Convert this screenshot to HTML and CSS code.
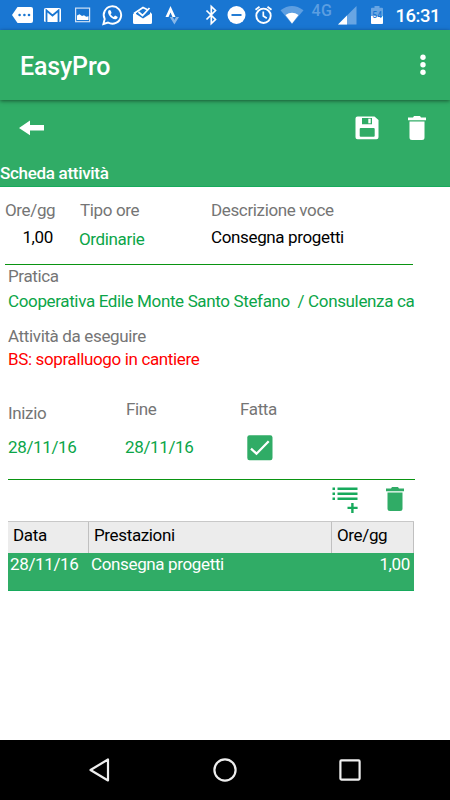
FILE: index.html
```html
<!DOCTYPE html>
<html lang="it">
<head>
<meta charset="utf-8">
<title>EasyPro</title>
<link rel="stylesheet" href="styles.css">
</head>
<body>
<div class="phone">
  <div class="status">
    <svg class="status-icons" width="392" height="30" viewBox="0 0 392 30" fill="none">
      <path d="M17.5 7H31q2 0 2 2v12q0 2-2 2H17.5L12 15z" fill="#fff"/>
      <g fill="#1976d2"><circle cx="19.6" cy="15" r="1.3"/><circle cx="24.4" cy="15" r="1.3"/><circle cx="29" cy="15" r="1.3"/></g>
      <rect x="44" y="8" width="17" height="14" rx="1.5" fill="#fff"/>
      <path d="M46.5 22V10.5l6 5 6-5V22" stroke="#1976d2" stroke-width="1.8"/>
      <rect x="75.6" y="8.1" width="14" height="13.6" stroke="#cfe2f6" stroke-width="1.2"/>
      <path d="M77 20v-4.500l2.500-1.200 2.500 1.700 2-.7 2.200 1.500 2.300-.5V20z" fill="#fff"/>
      <path d="M103.400 24l1.300-5a8.700 8.700 0 1 1 3.300 3.500z" stroke="#fff" stroke-width="1.9"/>
      <path d="M109 10c-3 2.500 2 9.700 6.800 9.200 1.500-.2 2.400-2 1.600-2.500l-2.300-1.100-1.400 1.400c-1.500-.5-2.500-1.700-3.100-2.800l1-1.300-.9-2.500z" fill="#fff"/>
      <path d="M133 14l3-2v2l7 4.500 7-4.500v-2l2 2v8.500q0 1.500-1.500 1.500h-16q-1.500 0-1.500-1.500z" fill="#fff"/>
      <path d="M134 13.500l9-6 4 2M138.500 12l4 3.500 7-7.500" stroke="#fff" stroke-width="1.800"/>
      <path d="M165.500 17L170.500 6l5 11h-3l-2-4.500-2 4.500z" fill="#fff"/>
      <path d="M169.800 17h3l1.600 3 1.600-3h3l-4.600 7.500z" fill="#85b6e8"/>
      <path d="M206.500 10.500l9 9-4.200 4V6.500l4.200 4-9 9" stroke="#fff" stroke-width="1.700"/>
      <circle cx="236.500" cy="15" r="9" fill="#fff"/>
      <path d="M231.500 15h10" stroke="#1976d2" stroke-width="1.900"/>
      <circle cx="263.500" cy="15.800" r="7.200" stroke="#fff" stroke-width="1.900"/>
      <path d="M255.500 9.700l4-3M271.500 9.700l-4-3M263.300 11.500v4.500l3.500 2.300" stroke="#fff" stroke-width="1.700"/>
      <path d="M280.500 10.200Q292 1.700 303.500 10.200L292 24z" fill="#5e9fe1"/>
      <path d="M285.500 15q6.500-4.500 13 0L292 23.500z" fill="#fff"/>
      <text x="311.500" y="16" class="net">4G</text>
      <path d="M338 24.500L356.500 6v18.500z" fill="#68a5e3"/>
      <path d="M338 24.500l9-9v9z" fill="#fff"/>
      <path d="M371 16V8.800q0-1 1-1h2.500V6h5v1.800h2.500q1 0 1 1V16z" fill="#68a5e3"/>
      <path d="M371 16h12v7.200q0 .8-1 .8h-10q-1 0-1-.8z" fill="#fff"/>
      <text x="372.300" y="18.200" class="charge">54</text>
    </svg>
    <span class="clock">16:31</span>
  </div>

  <header class="appbar">
    <h1>EasyPro</h1>
    <svg width="6" height="22" viewBox="0 0 6 22" fill="#fff"><circle cx="3" cy="3.300" r="2.700"/><circle cx="3" cy="10.800" r="2.700"/><circle cx="3" cy="18.300" r="2.700"/></svg>
  </header>

  <div class="toolbar">
    <div class="actions">
      <svg class="back" width="26" height="16" viewBox="0 0 26 16" fill="#fff"><path d="M0 8L11 .5V5h14v5.500H11v4.800z"/></svg>
      <svg width="24" height="24" viewBox="0 0 24 24"><path fill="#fff" fill-rule="evenodd" d="M2.500.5h17L23.500 4v17.300q0 2-2 2h-19q-2 0-2-2V2.500q0-2 2-2zM7 2v6.200h10V2zM5.700 12q-1 0-1 1v6.700q0 1 1 1h13q1 0 1-1V13q0-1-1-1z"/><path d="M13.300 2.700h2.400v4.600h-2.400z" fill="#fff"/></svg>
      <svg class="trash" width="18" height="24" viewBox="0 0 18 24" fill="#fff"><path d="M0 1.500h5L6 0h6l1 1.500h5v2.700H0zM1.500 5.500h15v16q0 2.500-2.500 2.500H4q-2.500 0-2.500-2.500z"/></svg>
    </div>
    <h2>Scheda attività</h2>
  </div>

  <main class="form">
    <div class="hours">
      <div class="field"><label>Ore/gg</label><span class="black amount">1,00</span></div>
      <div class="field kind"><label>Tipo ore</label><span class="green">Ordinarie</span></div>
      <div class="field"><label>Descrizione voce</label><span class="black">Consegna progetti</span></div>
    </div>
    <div class="field job"><label>Pratica</label><span class="green">Cooperativa Edile Monte Santo Stefano&nbsp; / Consulenza ca</span></div>
    <div class="field task"><label>Attività da eseguire</label><span class="red">BS: sopralluogo in cantiere</span></div>
    <div class="dates">
      <div class="field start"><label>Inizio</label><span class="green">28/11/16</span></div>
      <div class="field end"><label>Fine</label><span class="green">28/11/16</span></div>
      <div class="field done"><label>Fatta</label>
        <svg width="26" height="26" viewBox="0 0 26 26"><rect x=".3" y=".3" width="25.200" height="25" rx="2.200" fill="#30ac66"/><path d="M4 13.700l5.500 5L21.700 6.300" fill="none" stroke="#fff" stroke-width="2.300"/></svg>
      </div>
    </div>
    <div class="list-actions">
      <svg width="27" height="26" viewBox="0 0 27 26" fill="#17aa5c"><path d="M.5.500H3V3H.5zM5.500.500h20V3h-20zM.5 5.500H3V8H.5zM5.500 5.500h20V8h-20zM.5 10.500H3V13H.5zM5.500 10.500h20V13h-20zM19.200 16h2.400v3.700h4v2.400h-4V26h-2.400v-3.900h-3.700v-2.400h3.700z"/></svg>
      <svg width="18" height="24" viewBox="0 0 18 24" fill="#30ac66"><path d="M0 1.500h5L6 0h6l1 1.500h5v2.700H0zM1.500 5.500h15v16q0 2.500-2.500 2.500H4q-2.500 0-2.500-2.500z"/></svg>
    </div>
    <div class="table">
      <div class="row head"><span>Data</span><span>Prestazioni</span><span>Ore/gg</span></div>
      <div class="row selected"><span>28/11/16</span><span>Consegna progetti</span><span>1,00</span></div>
    </div>
  </main>

  <nav class="navbar">
    <svg width="22" height="26" viewBox="0 0 22 26"><path d="M1.500 13L19 2.500v21z" fill="none" stroke="#eee" stroke-width="2.200" stroke-linejoin="round"/></svg>
    <svg width="24" height="24" viewBox="0 0 24 24"><circle cx="12" cy="12" r="10.600" fill="none" stroke="#eee" stroke-width="2.200"/></svg>
    <svg width="22" height="22" viewBox="0 0 22 22"><rect x="1.400" y="1.400" width="19.200" height="19.200" rx="1" fill="none" stroke="#eee" stroke-width="2.200"/></svg>
  </nav>
</div>
</body>
</html>
```
FILE: styles.css
```css
* { box-sizing: border-box; }
body { margin: 0; background: #fff; font-family: Roboto, sans-serif; font-size: 17px; line-height: 20px; }
svg { display: block; flex: none; }
h1, h2 { margin: 0; color: #fff; font-weight: 500; }
.phone { display: flex; flex-direction: column; width: 450px; height: 800px; overflow: hidden; }

.status { display: flex; flex: none; height: 30px; background: #1976d2; }
.net { font-size: 16px; font-weight: 500; fill: #5b9ee1; letter-spacing: .3px; }
.charge { font-size: 8.500px; font-weight: 500; fill: #1976d2; }
.clock { margin: 6px 0 0 3.500px; color: #fff; font-size: 18.500px; font-weight: 500; letter-spacing: -.5px; }

.appbar { display: flex; flex: none; justify-content: space-between; height: 70px; padding: 24px 24.500px 0 20px; background: #30ac66; box-shadow: 0 1px 4px rgba(0, 0, 0, .5); z-index: 1; }
.appbar h1 { font-size: 25px; line-height: 26px; letter-spacing: -.15px; }

.toolbar { flex: none; height: 87px; background: #30ac66; border-bottom: 1px solid #17aa5c; }
.actions { display: flex; height: 63px; padding: 16px 24px 0 19px; }
.back { margin: 4px auto 0 0; }
.trash { margin-left: 29px; }
.toolbar h2 { font-size: 17px; line-height: 20px; letter-spacing: -.3px; }

.form { flex: 1; padding: 13px 0 0 8px; letter-spacing: -.36px; }
.field { display: flex; flex-direction: column; white-space: nowrap; }
.field label { color: #757575; }
.black { color: #000; }
.green { color: #0ba548; }
.red { color: #f00; }

.hours { display: grid; grid-template-columns: 74px 132px 1fr; width: 408px; height: 65px; margin-left: -3px; border-bottom: 1.500px solid #0a9412; }
.hours .field { gap: 7px; }
.amount { width: 48px; text-align: right; }
.hours .kind { gap: 9px; }
.kind label { padding-left: 1px; }

.job { gap: 5px; width: 407px; margin-top: 1px; }
.task { gap: 3px; margin-top: 15px; }
.dates { display: grid; grid-template-columns: 117px 115px 1fr; align-items: start; width: 407px; height: 81px; margin-top: 30px; border-bottom: 1px solid #0a9412; }
.start { gap: 14px; padding-top: 4px; }
.end { gap: 18px; }
.end label { padding-left: 1px; }
.done { gap: 16px; }
.done svg { margin-left: 7px; }

.list-actions { display: flex; justify-content: flex-end; gap: 27px; width: 396px; height: 41px; padding-top: 7px; }
.table { width: 406px; }
.row { display: grid; grid-template-columns: 81px 243px 82px; }
.head { height: 32px; background: #ececec; border-top: 1px solid #c8c8c8; color: #000; }
.head span { padding: 3px 0 0 5px; border-right: 1px solid #c0c0c0; }
.selected { height: 38px; background: #30ac66; border-bottom: 1px solid #17aa5c; color: #fff; }
.selected span { padding: 1px 4px 0 2px; }
.selected span:last-child { text-align: right; }

.navbar { display: flex; flex: none; align-items: center; justify-content: space-between; height: 60px; padding: 0 89px; background: #000; }
```
